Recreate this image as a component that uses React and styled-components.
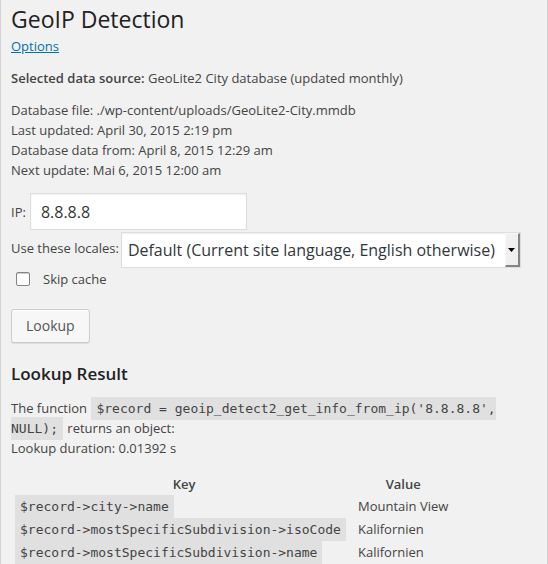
import React from "react";
import styled, { createGlobalStyle } from "styled-components";

const GlobalStyle = createGlobalStyle`
  *, *::before, *::after { box-sizing: border-box; }
  body {
    margin: 0;
    background: #f1f1f1;
    color: #444;
    font: 13px/20px "Open Sans", sans-serif;
  }
`;

const Page = styled.main`
  min-height: 100vh;
  padding: 5px 10px 0;
  border: solid #d2d2d2;
  border-width: 0 1px;
`;

const Title = styled.h1`
  margin: 0;
  padding-bottom: 2px;
  font-size: 23px;
  font-weight: 400;
  line-height: 29px;
  color: #222;
`;

const Subtitle = styled.h2`
  margin: 18px 0 12px;
  font-size: 17px;
  font-weight: 600;
  line-height: 25px;
  color: #222;
`;

const Link = styled.a`
  color: #0073aa;
  text-decoration: underline;
`;

const Paragraph = styled.p`
  margin: ${(p) => (p.$spaced ? "12px 0" : "0")};

  strong { font-weight: 600; }
`;

const Form = styled.form`
  margin-top: 13px;
`;

const Field = styled.div`
  display: flex;
  align-items: center;
  gap: ${(p) => (p.$tight ? "2px" : "4px")};
  margin-bottom: ${(p) => (p.$tight ? "1px" : "2px")};

  label { padding-bottom: ${(p) => (p.$tight ? "4px" : "0")}; }
`;

const TextInput = styled.input`
  width: 217px;
  height: 37px;
  padding: 3px 10px;
  border: 1px solid #ddd;
  background: #fff;
  box-shadow: inset 0 1px 2px rgba(0, 0, 0, 0.07);
  color: #32373c;
  font: 16px/22px "Open Sans", sans-serif;
`;

const SelectBox = styled.div`
  position: relative;
`;

const Select = styled.select`
  display: block;
  width: 400px;
  height: 36px;
  padding: 0 20px 0 6px;
  border: 1px solid #ddd;
  border-radius: 0;
  background: #fff;
  box-shadow: inset 0 1px 2px rgba(0, 0, 0, 0.07);
  appearance: none;
  color: #32373c;
  font: 16px/22px "Open Sans", sans-serif;
`;

const SelectArrow = styled.span`
  position: absolute;
  top: 1px;
  right: 1px;
  bottom: 1px;
  width: 15px;
  display: flex;
  align-items: center;
  justify-content: center;
  border: solid;
  border-width: 1px 2px 2px 1px;
  border-color: #f8f8f8 #858585 #858585 #f8f8f8;
  background: #f0f0f0;
  pointer-events: none;
`;

const CheckLabel = styled.label`
  display: flex;
  align-items: center;
  gap: 13px;
  padding-left: 5px;
`;

const Checkbox = styled.input`
  appearance: none;
  width: 14px;
  height: 14px;
  margin: 0;
  border: 1px solid #858585;
  border-radius: 2px;
  background: #fff;
  box-shadow: inset 0 1px 1px #ccc;

  &:checked { background: #0073aa; }
`;

const Button = styled.button`
  height: 34px;
  margin-top: 20px;
  padding: 0 14px;
  border: 1px solid #ccc;
  border-radius: 3px;
  background: #f7f7f7;
  box-shadow: inset 0 1px 0 #fff, 0 1px 0 rgba(0, 0, 0, 0.08);
  color: #555;
  font: 14px/20px "Open Sans", sans-serif;
`;

const Code = styled.code`
  margin: 0 1px;
  padding: 4px 5px 4px;
  background: #e0e0e0;
  font: 13px/13px "DejaVu Sans Mono", monospace;
`;

const Table = styled.table`
  margin-top: 14px;
  border-spacing: 2px 1px;

  th, td { padding: 1px; line-height: 20px; }
  th { padding-bottom: 0; font-weight: 600; }
  th:first-child { width: 342px; }
`;

const files = [
  "Database file: ./wp-content/uploads/GeoLite2-City.mmdb",
  "Last updated: April 30, 2015 2:19 pm",
  "Database data from: April 8, 2015 12:29 am",
  "Next update: Mai 6, 2015 12:00 am",
];

const rows = [
  ["$record->city->name", "Mountain View"],
  ["$record->mostSpecificSubdivision->isoCode", "Kalifornien"],
  ["$record->mostSpecificSubdivision->name", "Kalifornien"],
  ["$record->country->isoCode", "US"],
];

export default function App() {
  return (
    <>
      <GlobalStyle />
      <Page>
        <Title>GeoIP Detection</Title>
        <Link href="#options">Options</Link>
        <Paragraph $spaced>
          <strong>Selected data source:</strong> GeoLite2 City database (updated monthly)
        </Paragraph>
        {files.map((line) => (
          <Paragraph key={line}>{line}</Paragraph>
        ))}
        <Form onSubmit={(e) => e.preventDefault()}>
          <Field>
            <label htmlFor="ip">IP:</label>
            <TextInput id="ip" type="text" defaultValue="8.8.8.8" />
          </Field>
          <Field $tight>
            <label htmlFor="locales">Use these locales:</label>
            <SelectBox>
              <Select id="locales">
                <option>Default (Current site language, English otherwise)</option>
              </Select>
              <SelectArrow>
                <svg width="7" height="4" viewBox="0 0 7 4" aria-hidden="true">
                  <path d="M0 0h7L3.5 4z" fill="#000" />
                </svg>
              </SelectArrow>
            </SelectBox>
          </Field>
          <CheckLabel>
            <Checkbox type="checkbox" />
            Skip cache
          </CheckLabel>
          <Button type="submit">Lookup</Button>
        </Form>
        <Subtitle>Lookup Result</Subtitle>
        <Paragraph>
          The function{" "}
          <Code>$record = geoip_detect2_get_info_from_ip('8.8.8.8', NULL);</Code> returns an
          object:
          <br />
          Lookup duration: 0.01392 s
        </Paragraph>
        <Table>
          <thead>
            <tr>
              <th scope="col">Key</th>
              <th scope="col">Value</th>
            </tr>
          </thead>
          <tbody>
            {rows.map(([key, value]) => (
              <tr key={key}>
                <td><Code>{key}</Code></td>
                <td>{value}</td>
              </tr>
            ))}
          </tbody>
        </Table>
      </Page>
    </>
  );
}
